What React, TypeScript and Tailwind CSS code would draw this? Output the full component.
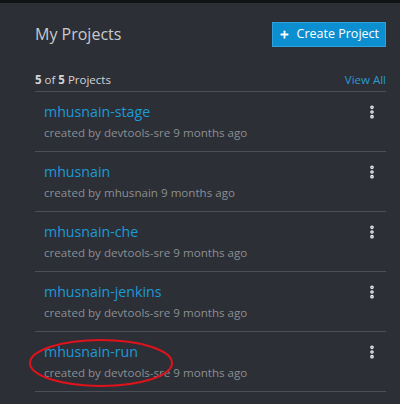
import { EllipsisVertical, Plus } from "lucide-react";

const projects = [
  { name: "mhusnain-stage", owner: "devtools-sre" },
  { name: "mhusnain", owner: "mhusnain" },
  { name: "mhusnain-che", owner: "devtools-sre" },
  { name: "mhusnain-jenkins", owner: "devtools-sre" },
  { name: "mhusnain-run", owner: "devtools-sre", circled: true },
];

function ProjectRow({ name, owner, circled }: { name: string; owner: string; circled?: boolean }) {
  return (
    <li className="relative flex h-[60px] items-start justify-between border-b border-[#4b4f56] pl-[9px] pr-[6px] pt-[10px]">
      <div>
        <a className="block text-[14.2px] leading-[20px] text-[#1d9ad6]">{name}</a>
        <p className="mt-[2px] text-[11.6px] leading-[18px] text-[#8b8e92]">
          created by {owner} 9 months ago
        </p>
      </div>
      <button type="button" className="mt-[2px] text-[#f0f0f0]">
        <EllipsisVertical className="h-[16px] w-[16px]" strokeWidth={3.5} />
      </button>
      {circled ? (
        <svg
          className="pointer-events-none absolute left-[-7px] top-[6px]"
          width="146"
          height="50"
          viewBox="0 0 146 50"
        >
          <ellipse cx="73" cy="25" rx="71" ry="23" fill="none" stroke="#e0121b" strokeWidth="2" />
        </svg>
      ) : null}
    </li>
  );
}

export default function App() {
  return (
    <div
      className="h-[404px] w-[400px] overflow-hidden bg-[#2c2f36]"
      style={{ fontFamily: '"Open Sans", "Noto Sans", sans-serif' }}
    >
      <div className="h-[3px] bg-[#111214]" />
      <div className="pl-[35px] pr-[14px]">
        <div className="flex items-center justify-between pt-[18px]">
          <h1 className="text-[16px] leading-[26px] text-[#c9cacc]">My Projects</h1>
          <button
            type="button"
            className="flex h-[25px] items-center gap-[7px] border border-[#2fa0dc] bg-[#0b8fd1] pl-[6px] pr-[6px] text-[12.5px] text-white"
          >
            <Plus className="h-[11px] w-[11px]" strokeWidth={4} />
            Create Project
          </button>
        </div>
        <div className="mt-[24px] flex items-center justify-between border-b border-[#4b4f56] pb-[2px] text-[11.5px] leading-[18px]">
          <span className="text-[#d3d4d6]">
            <b>5</b> of <b>5</b> Projects
          </span>
          <a className="text-[#2b9bd3]">View All</a>
        </div>
        <ul>
          {projects.map((p) => (
            <ProjectRow key={p.name} {...p} />
          ))}
        </ul>
      </div>
    </div>
  );
}
